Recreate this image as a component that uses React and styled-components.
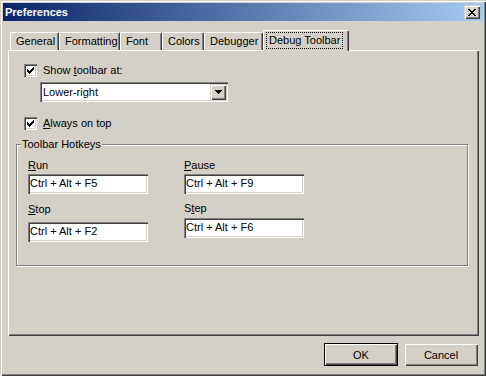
import styled, { createGlobalStyle } from "styled-components";

const GlobalStyle = createGlobalStyle`
  html, body {
    margin: 0;
    padding: 0;
    background: #d4d0c8;
  }
  body {
    font-family: "Liberation Sans", Arial, sans-serif;
    font-size: 11px;
    color: #000;
  }
  u {
    text-underline-offset: 1px;
  }
`;

const raised = `
  box-shadow: inset 1px 1px #d4d0c8, inset 2px 2px #fff,
    inset -1px -1px #404040, inset -2px -2px #808080;
`;

const sunken = `
  box-shadow: inset 1px 1px #808080, inset 2px 2px #404040,
    inset -1px -1px #fff, inset -2px -2px #d4d0c8;
`;

const Window = styled.div`
  box-sizing: border-box;
  width: 486px;
  height: 376px;
  padding: 3px;
  background: #d4d0c8;
  ${raised}
  display: flex;
  flex-direction: column;
`;

const TitleBar = styled.div`
  height: 18px;
  display: flex;
  align-items: center;
  justify-content: space-between;
  padding: 0 3px 0 2px;
  background: linear-gradient(to right, #0a246a, #a6caf0);
  color: #fff;
  font-weight: bold;
  font-size: 11px;
`;

const CloseButton = styled.div`
  box-sizing: border-box;
  width: 16px;
  height: 14px;
  background: #d4d0c8;
  ${raised}
  display: flex;
  align-items: center;
  justify-content: center;
`;

const Body = styled.div`
  display: flex;
  flex-direction: column;
  padding: 9px 4px 0 5px;
`;

const TabStrip = styled.div`
  display: flex;
  align-items: flex-end;
  height: 20px;
  padding-left: 2px;
`;

const Tab = styled.div`
  box-sizing: border-box;
  width: ${({ $width }) => $width}px;
  height: ${({ $active }) => ($active ? 21 : 18)}px;
  margin-bottom: ${({ $active }) => ($active ? -1 : 0)}px;
  padding: ${({ $active }) => ($active ? "0 0 2px 3px" : "0 0 0 5px")};
  position: relative;
  z-index: ${({ $active }) => ($active ? 1 : 0)};
  background: #d4d0c8;
  border-top: 1px solid #fff;
  border-left: 1px solid #fff;
  border-right: 1px solid #404040;
  border-radius: 2px 2px 0 0;
  box-shadow: inset -1px 0 #808080;
  display: flex;
  align-items: center;
  line-height: 13px;
  white-space: nowrap;
`;

const FocusText = styled.span`
  outline: 1px dotted #000;
  padding: 1px 2px;
`;

const Panel = styled.div`
  box-sizing: border-box;
  height: 286px;
  background: #d4d0c8;
  box-shadow: inset 1px 1px #fff, inset -1px -1px #404040,
    inset -2px -2px #808080;
  padding: 14px 0 0 8px;
`;

const Options = styled.div`
  padding-left: 8px;
`;

const CheckRow = styled.div`
  display: flex;
  align-items: center;
  gap: 6px;
  height: 13px;
  line-height: 13px;
`;

const CheckBox = styled.div`
  box-sizing: border-box;
  width: 13px;
  height: 13px;
  background: #fff;
  ${sunken}
  display: flex;
  align-items: center;
  justify-content: center;
`;

const Combo = styled.div`
  box-sizing: border-box;
  width: 188px;
  height: 20px;
  margin: 5px 0 15px 16px;
  padding: 2px;
  background: #fff;
  ${sunken}
  display: flex;
  align-items: center;
`;

const ComboText = styled.span`
  flex: 1;
  padding-left: 1px;
`;

const DropButton = styled.div`
  box-sizing: border-box;
  width: 16px;
  height: 16px;
  background: #d4d0c8;
  ${raised}
  display: flex;
  align-items: center;
  justify-content: center;
`;

const Group = styled.fieldset`
  box-sizing: border-box;
  width: 452px;
  min-width: 0;
  margin: 7px 0 0 0;
  padding: 0 0 23px 0;
  border: 1px solid #808080;
  box-shadow: inset 1px 1px #fff, 1px 1px #fff;
`;

const Legend = styled.legend`
  margin-left: 4px;
  padding: 0 1px;
  line-height: 14px;
  background: #d4d0c8;
`;

const HotkeyGrid = styled.div`
  display: grid;
  grid-template-columns: 120px 120px;
  column-gap: 36px;
  align-items: start;
  padding: 8px 0 0 11px;
`;

const Field = styled.div`
  display: flex;
  flex-direction: column;
  margin-top: ${({ $top }) => $top}px;
`;

const FieldLabel = styled.div`
  line-height: 13px;
  margin-bottom: ${({ $gap }) => $gap}px;
`;

const Edit = styled.input`
  box-sizing: border-box;
  width: 120px;
  height: 20px;
  border: 0;
  margin: 0;
  padding: 0 0 2px 2px;
  background: #fff;
  ${sunken}
  font: inherit;
  color: #000;
  outline: none;
`;

const ButtonRow = styled.div`
  display: flex;
  justify-content: flex-end;
  gap: 6px;
  margin-top: 7px;
  padding-right: 1px;
`;

const Button = styled.div`
  box-sizing: border-box;
  width: 74px;
  height: 23px;
  background: #d4d0c8;
  display: flex;
  align-items: center;
  justify-content: center;
  ${({ $default }) =>
    $default
      ? `border: 1px solid #000;
         box-shadow: inset 1px 1px #fff, inset -1px -1px #404040, inset -2px -2px #808080;`
      : raised}
`;

function CheckMark() {
  const cols = [2, 3, 4, 3, 2, 1, 0];
  return (
    <svg width="7" height="7" viewBox="0 0 7 7" shapeRendering="crispEdges">
      {cols.map((y, x) => (
        <rect key={x} x={x} y={y} width="1" height="3" fill="#000" />
      ))}
    </svg>
  );
}

function Arrow() {
  return (
    <svg width="7" height="4" viewBox="0 0 7 4" shapeRendering="crispEdges">
      <rect x="0" y="0" width="7" height="1" fill="#000" />
      <rect x="1" y="1" width="5" height="1" fill="#000" />
      <rect x="2" y="2" width="3" height="1" fill="#000" />
      <rect x="3" y="3" width="1" height="1" fill="#000" />
    </svg>
  );
}

function CloseGlyph() {
  return (
    <svg width="8" height="7" viewBox="0 0 8 7" shapeRendering="crispEdges">
      {[0, 1, 2, 3, 4, 5, 6].map((i) => (
        <g key={i}>
          <rect x={i} y={i} width="2" height="1" fill="#000" />
          <rect x={6 - i} y={i} width="2" height="1" fill="#000" />
        </g>
      ))}
    </svg>
  );
}

const tabs = [
  { label: "General", width: 49 },
  { label: "Formatting", width: 61 },
  { label: "Font", width: 42 },
  { label: "Colors", width: 42 },
  { label: "Debugger", width: 59 },
  { label: "Debug Toolbar", width: 86, active: true },
];

export default function App() {
  return (
    <>
      <GlobalStyle />
      <Window>
        <TitleBar>
          <span>Preferences</span>
          <CloseButton>
            <CloseGlyph />
          </CloseButton>
        </TitleBar>
        <Body>
          <TabStrip>
            {tabs.map((t) => (
              <Tab key={t.label} $width={t.width} $active={t.active}>
                {t.active ? <FocusText>{t.label}</FocusText> : t.label}
              </Tab>
            ))}
          </TabStrip>
          <Panel>
            <Options>
              <CheckRow>
                <CheckBox>
                  <CheckMark />
                </CheckBox>
                <span>
                  Show <u>t</u>oolbar at:
                </span>
              </CheckRow>
              <Combo>
                <ComboText>Lower-right</ComboText>
                <DropButton>
                  <Arrow />
                </DropButton>
              </Combo>
              <CheckRow>
                <CheckBox>
                  <CheckMark />
                </CheckBox>
                <span>
                  <u>A</u>lways on top
                </span>
              </CheckRow>
            </Options>
            <Group>
              <Legend>Toolbar Hotkeys</Legend>
              <HotkeyGrid>
                <Field $top={0}>
                  <FieldLabel $gap={2}>
                    <u>R</u>un
                  </FieldLabel>
                  <Edit readOnly value="Ctrl + Alt + F5" />
                </Field>
                <Field $top={0}>
                  <FieldLabel $gap={2}>
                    <u>P</u>ause
                  </FieldLabel>
                  <Edit readOnly value="Ctrl + Alt + F9" />
                </Field>
                <Field $top={9}>
                  <FieldLabel $gap={6}>
                    <u>S</u>top
                  </FieldLabel>
                  <Edit readOnly value="Ctrl + Alt + F2" />
                </Field>
                <Field $top={8}>
                  <FieldLabel $gap={3}>
                    S<u>t</u>ep
                  </FieldLabel>
                  <Edit readOnly value="Ctrl + Alt + F6" />
                </Field>
              </HotkeyGrid>
            </Group>
          </Panel>
          <ButtonRow>
            <Button $default>OK</Button>
            <Button>Cancel</Button>
          </ButtonRow>
        </Body>
      </Window>
    </>
  );
}
